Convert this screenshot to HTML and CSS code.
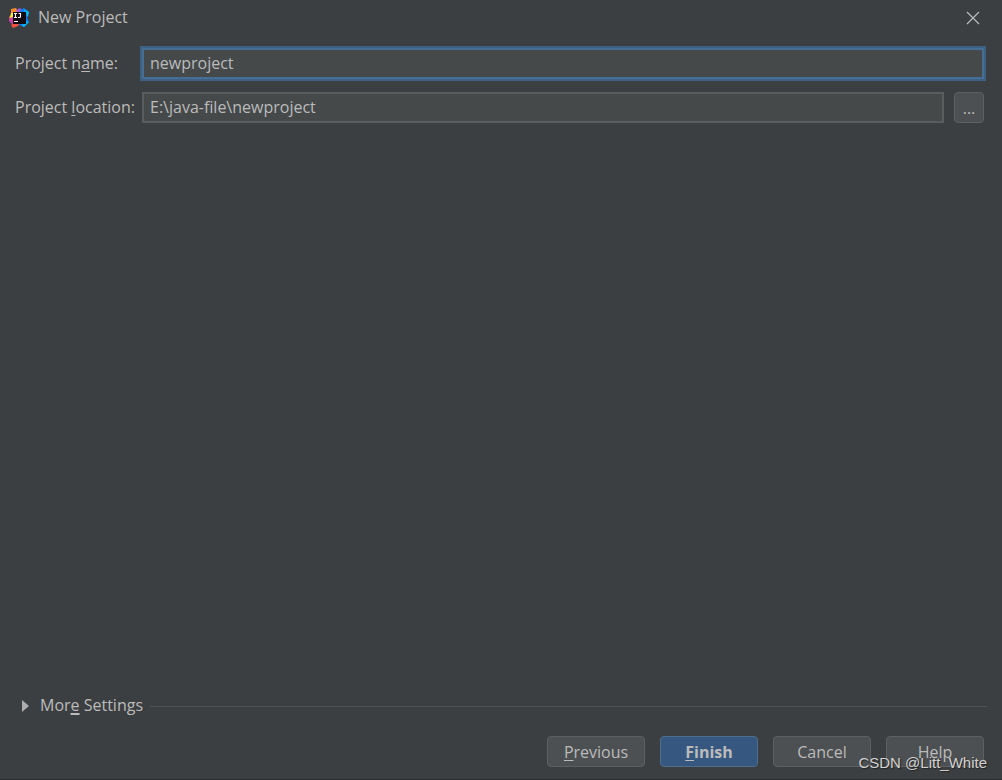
FILE: index.html
```html
<!DOCTYPE html>
<html lang="en">
<head>
<meta charset="utf-8">
<title>New Project</title>
<link rel="stylesheet" href="styles.css">
</head>
<body>
<main class="dialog">
  <header class="titlebar">
    <svg class="logo" viewBox="0 0 20 20" aria-hidden="true">
      <path fill="#fc8a2c" d="M2 1 7 0 10 5 6 11 1 12 0 9 2 7Z"/>
      <path fill="#c93ca0" d="M0 10 5 8 8 15 4 17 0 13Z"/>
      <path fill="#f9513f" d="M5 15 11 15 9 18 4 20 2 17Z"/>
      <path fill="#a05ad6" d="M7 2 11 0 14 4 9 6Z"/>
      <path fill="#087cfa" d="M11 2 15 0 20 4 18 9 20 14 15 19 10 17 14 9Z"/>
      <path fill="#07b5f0" d="M15 1 20 4 19 9 16 6ZM16 13 20 14 15 19 13 17Z"/>
      <path fill="#fde84a" d="M2 5 4 5 4 9 1 10Z"/>
      <path fill="#130b12" d="M4 4h13v12H4z"/>
      <path fill="none" stroke="#fff" stroke-width="1.1" d="M5 5.5h3M6.5 5.5v4M5 9.5h3M9.5 5.5h2v3q0 1-1 1H9M5 13.5h4"/>
    </svg>
    <h1 class="title">New Project</h1>
    <button class="close" type="button" aria-label="Close">
      <svg class="close-icon" viewBox="0 0 14 14"><path d="M1 1 13 13M13 1 1 13"/></svg>
    </button>
  </header>

  <form class="form">
    <label class="label" for="name">Project n<u>a</u>me:</label>
    <input class="field focused" id="name" type="text" value="newproject">
    <label class="label" for="location">Project <u>l</u>ocation:</label>
    <div class="location">
      <input class="field" id="location" type="text" value="E:\java-file\newproject">
      <button class="button browse" type="button" aria-label="Browse">...</button>
    </div>
  </form>

  <div class="more">
    <button class="more-toggle" type="button" aria-expanded="false">
      <svg class="arrow" viewBox="0 0 7 12" aria-hidden="true"><path d="M0 0 7 6 0 12Z"/></svg>
      <span class="more-text">Mor<u class="thick">e</u> Settings</span>
    </button>
    <hr class="rule">
  </div>

  <footer class="actions">
    <button class="button" type="button"><span><u>P</u>revious</span></button>
    <button class="button primary" type="button"><span><u>F</u>inish</span></button>
    <button class="button" type="button">Cancel</button>
    <button class="button" type="button">Help</button>
  </footer>
  <span class="watermark">CSDN @Litt_White</span>
</main>
</body>
</html>
```

FILE: styles.css
```css
* {
  box-sizing: border-box;
}

body {
  margin: 0;
}

.dialog {
  position: relative;
  display: flex;
  flex-direction: column;
  min-height: 100vh;
  border-bottom: 1px solid #2b2d30;
  background: #3c3f41;
  color: #bbbbbb;
  font: 16px/20px "Open Sans", "Noto Sans", sans-serif;
}

button,
input {
  color: inherit;
  font: inherit;
}

u {
  text-decoration-thickness: 1px;
  text-underline-offset: 2px;
  text-decoration-skip-ink: none;
}

.thick {
  text-decoration-thickness: 2px;
}

.titlebar {
  display: flex;
  align-items: center;
  height: 36px;
  padding: 0 22px 0 9px;
}

.logo {
  width: 20px;
  height: 20px;
}

.title {
  flex: 1;
  margin: 0 0 0 9px;
  padding-bottom: 2px;
  font-size: 16px;
  font-weight: 400;
}

.close {
  display: flex;
  padding: 0;
  border: 0;
  background: none;
}

.close-icon {
  width: 14px;
  height: 14px;
  fill: none;
  stroke: #bbbbbb;
  stroke-width: 1.2;
}

.form {
  display: grid;
  grid-template-columns: 119px 1fr;
  align-items: center;
  column-gap: 8px;
  row-gap: 13px;
  padding: 12px 18px 0 15px;
}

.label {
  padding-bottom: 2px;
  white-space: nowrap;
}

.field {
  width: 100%;
  min-width: 0;
  height: 31px;
  padding: 0 6px 2px;
  border: 2px solid #5a5d5e;
  border-radius: 0;
  outline: 0;
  background: #45494a;
}

.focused {
  border-color: #466d94;
  box-shadow: 0 0 0 2px #3d6185;
}

.location {
  display: flex;
  gap: 10px;
}

.button {
  display: flex;
  align-items: center;
  justify-content: center;
  width: 98px;
  height: 31px;
  padding: 0;
  border: 1px solid #5e6060;
  border-radius: 4px;
  background: #4c5052;
}

.browse {
  flex: none;
  width: 30px;
}

.primary {
  border-color: #4c708c;
  background: #365880;
  font-weight: 700;
}

.more {
  display: flex;
  align-items: center;
  gap: 7px;
  margin-top: auto;
  padding: 0 15px 0 22px;
}

.more-toggle {
  display: flex;
  align-items: center;
  gap: 11px;
  padding: 0;
  border: 0;
  background: none;
}

.more-text {
  padding-bottom: 2px;
}

.arrow {
  width: 7px;
  height: 12px;
  fill: #adadad;
}

.rule {
  flex: 1;
  margin: 0;
  border: 0;
  border-top: 1px solid #515456;
}

.actions {
  display: flex;
  justify-content: flex-end;
  gap: 15px;
  padding: 19px 18px 12px;
}

.watermark {
  position: absolute;
  right: 15px;
  bottom: 6px;
  color: #d0d0d0;
  font: 15px/20px "Liberation Sans", sans-serif;
  text-shadow: 1px 1px 1px #222222;
  pointer-events: none;
}
```
